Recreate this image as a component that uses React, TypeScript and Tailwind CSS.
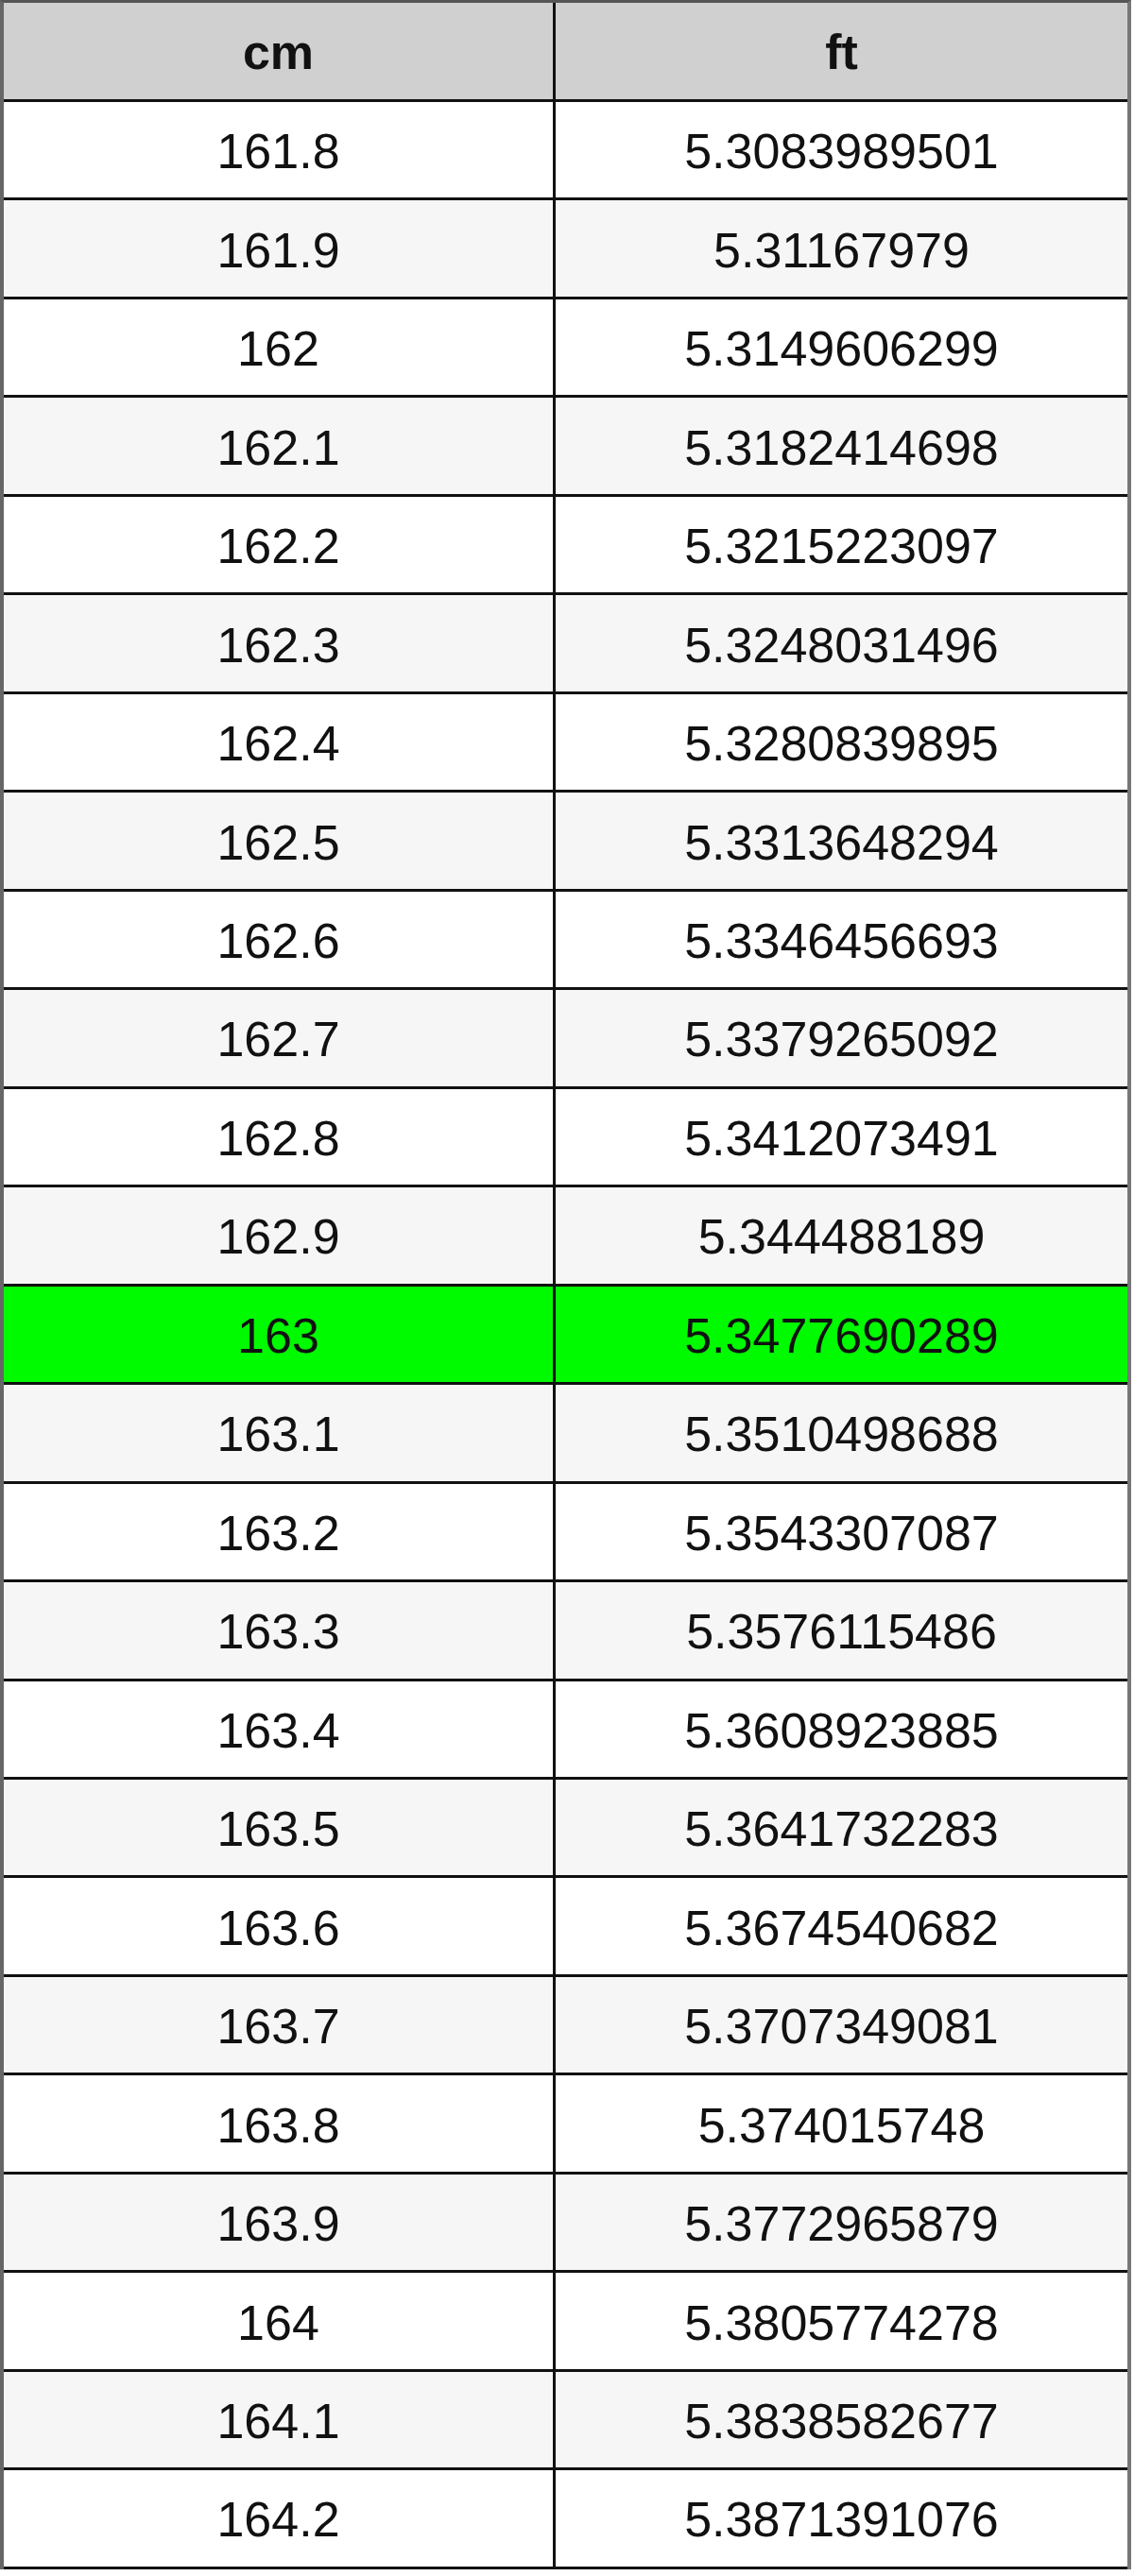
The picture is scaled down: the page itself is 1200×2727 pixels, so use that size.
import React from "react";

const rows: [string, string][] = [
  ["161.8", "5.3083989501"],
  ["161.9", "5.31167979"],
  ["162", "5.3149606299"],
  ["162.1", "5.3182414698"],
  ["162.2", "5.3215223097"],
  ["162.3", "5.3248031496"],
  ["162.4", "5.3280839895"],
  ["162.5", "5.3313648294"],
  ["162.6", "5.3346456693"],
  ["162.7", "5.3379265092"],
  ["162.8", "5.3412073491"],
  ["162.9", "5.344488189"],
  ["163", "5.3477690289"],
  ["163.1", "5.3510498688"],
  ["163.2", "5.3543307087"],
  ["163.3", "5.3576115486"],
  ["163.4", "5.3608923885"],
  ["163.5", "5.3641732283"],
  ["163.6", "5.3674540682"],
  ["163.7", "5.3707349081"],
  ["163.8", "5.374015748"],
  ["163.9", "5.3772965879"],
  ["164", "5.3805774278"],
  ["164.1", "5.3838582677"],
  ["164.2", "5.3871391076"],
];

export default function App() {
  return (
    <div className="w-[1200px] h-[2727px] bg-white font-['Liberation_Sans',Arial,sans-serif] text-[#111]">
      <div className="w-[1197px] border-l-4 border-r-4 border-t-[3px] border-l-[#666] border-r-[#777] border-t-[#555] box-border">
        <div className="flex h-[105px] border-b-[3px] border-b-[#111] bg-[#d0d0d0] box-border">
          <div className="w-[584px] border-r-[3px] border-r-[#111] flex items-center justify-center text-[52px] font-bold leading-none pt-[2px] box-border">
            cm
          </div>
          <div className="flex-1 flex items-center justify-center text-[52px] font-bold leading-none pt-[2px]">
            ft
          </div>
        </div>
        {rows.map(([a, b], i) => {
          const bg =
            a === "163" ? "bg-[#00fa00]" : i % 2 === 1 ? "bg-[#f6f6f6]" : "bg-white";
          return (
            <div
              key={a}
              className={`flex h-[104.48px] border-b-[3px] border-b-[#111] box-border ${bg}`}
            >
              <div className="w-[584px] border-r-[3px] border-r-[#111] flex items-center justify-center text-[52px] leading-none pt-[3px] box-border">
                {a}
              </div>
              <div className="flex-1 flex items-center justify-center text-[52px] leading-none pt-[3px]">
                {b}
              </div>
            </div>
          );
        })}
      </div>
    </div>
  );
}
